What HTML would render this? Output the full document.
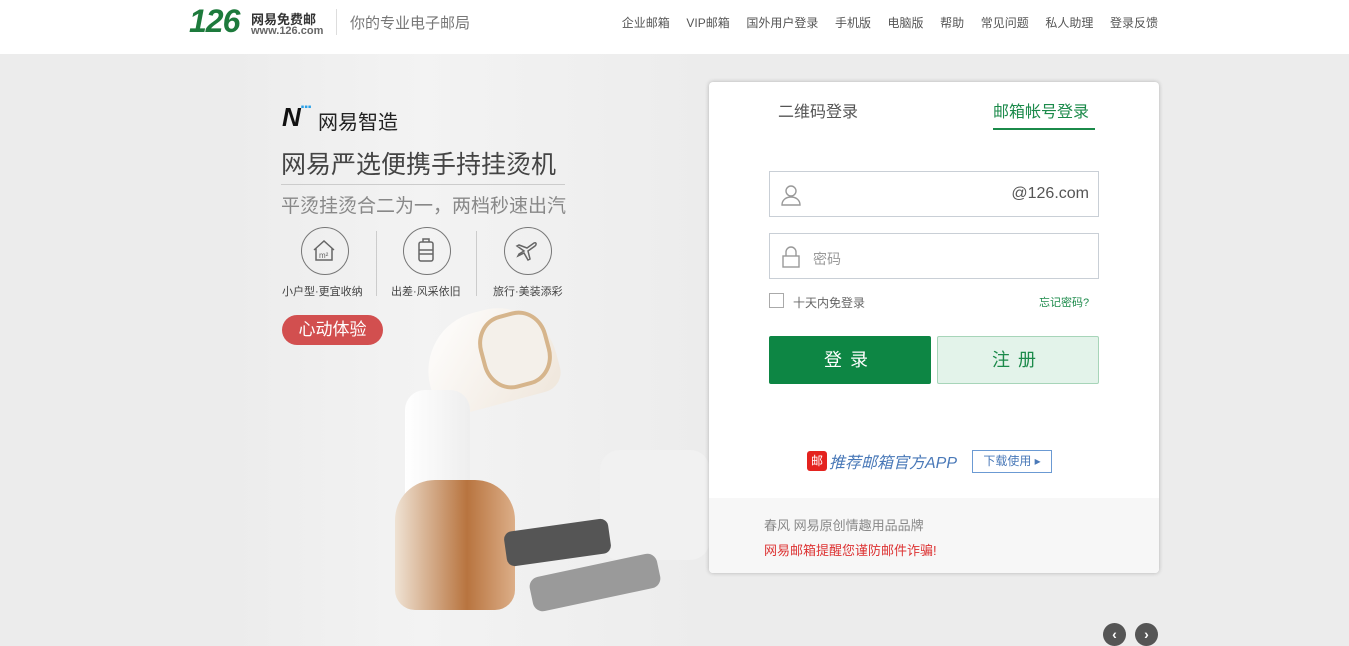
<!DOCTYPE html>
<html><head><meta charset="utf-8"><style>
*{margin:0;padding:0;box-sizing:border-box}
body{width:1349px;height:646px;overflow:hidden;font-family:"Liberation Sans","Noto Sans CJK SC",sans-serif;background:#ececec;position:relative}
.hd{position:absolute;left:0;top:0;width:1349px;height:54px;background:#fff}
.abs{position:absolute}
.nav a{color:#555;font-size:12px;margin-left:16.6px;text-decoration:none}
.box{position:absolute;left:709px;top:82px;width:450px;height:491px;background:#fff;border-radius:4px;box-shadow:0 0 4px rgba(0,0,0,.25);overflow:hidden}
.inp{position:absolute;left:60px;width:330px;height:46px;border:1px solid #c9cfd6}
.circ{position:absolute;width:48px;height:48px;border:1.5px solid #777;border-radius:50%}
</style></head><body>
<div class="hd">
 <div class="abs" style="left:189px;top:3px;font:italic bold 32px 'Liberation Sans',sans-serif;color:#1d7a3c;letter-spacing:-1px">126</div>
 <div class="abs" style="left:251px;top:9px;font-size:13px;font-weight:bold;color:#333">网易免费邮</div>
 <div class="abs" style="left:251px;top:25px;font-size:11px;font-weight:bold;color:#666">www.126.com</div>
 <div class="abs" style="left:336px;top:9px;width:1px;height:26px;background:#ddd"></div>
 <div class="abs" style="left:350px;top:12px;font-size:15px;color:#777">你的专业电子邮局</div>
 <div class="abs nav" style="right:191px;top:14px"><a>企业邮箱</a><a>VIP邮箱</a><a>国外用户登录</a><a>手机版</a><a>电脑版</a><a>帮助</a><a>常见问题</a><a>私人助理</a><a>登录反馈</a></div>
</div>
<div class="abs" style="left:230px;top:54px;width:480px;height:592px;background:linear-gradient(90deg,#ececec,#f3f3f3 40%,#ececec)"></div>
<div class="abs" style="left:282px;top:102px;font:italic 900 26px 'Liberation Sans',sans-serif;color:#111">N<span style="color:#2aa0e8;font-size:10px;vertical-align:top">▪▪▪</span></div>
<div class="abs" style="left:318px;top:106px;font-size:20px;color:#222">网易智造</div>
<div class="abs" style="left:281px;top:145px;font-size:25px;color:#444">网易严选便携手持挂烫机</div>
<div class="abs" style="left:281px;top:184px;width:284px;height:1px;background:#ccc"></div>
<div class="abs" style="left:281px;top:191px;font-size:19px;color:#888">平烫挂烫合二为一，两档秒速出汽</div>
<div class="circ" style="left:301px;top:227px"><svg width="45" height="45" viewBox="0 0 45 45" fill="none" stroke="#666" stroke-width="1.5"><path d="M12 22l10-9 10 9M14 20v12h16V20"/><text x="17" y="30" font-size="8" fill="#666" stroke="none">m²</text></svg></div>
<div class="circ" style="left:403px;top:227px"><svg width="45" height="45" viewBox="0 0 45 45" fill="none" stroke="#666" stroke-width="1.5"><rect x="15" y="14" width="14" height="19" rx="2"/><path d="M19 14v-3h6v3M15 22h14M15 26h14"/></svg></div>
<div class="circ" style="left:504px;top:227px"><svg width="45" height="45" viewBox="0 0 45 45" fill="none" stroke="#666" stroke-width="1.5"><path d="M13 28l6-3 4 7 2-1-2-8 7-5c2-2 1-4-1-3l-7 5-8-3-2 1 7 5-5 3z"/></svg></div>
<div class="abs" style="left:376px;top:231px;width:1px;height:65px;background:#ccc"></div>
<div class="abs" style="left:476px;top:231px;width:1px;height:65px;background:#ccc"></div>
<div class="abs" style="left:282px;top:283px;font-size:11px;color:#444">小户型·更宜收纳</div>
<div class="abs" style="left:391px;top:283px;font-size:11px;color:#444">出差·风采依旧</div>
<div class="abs" style="left:493px;top:283px;font-size:11px;color:#444">旅行·美装添彩</div>
<div class="abs" style="left:282px;top:315px;width:101px;height:30px;border-radius:15px;background:#d24f4f;color:#fff;font-size:17px;text-align:center;line-height:30px">心动体验</div>
<!-- product -->
<div class="abs" style="left:600px;top:450px;width:110px;height:110px;background:#f1f1f1;border-radius:20px"></div>
<div class="abs" style="left:425px;top:310px;width:130px;height:95px;border-radius:60px 60px 20px 20px;background:linear-gradient(135deg,#fff,#efe6db);transform:rotate(-15deg)"></div>
<div class="abs" style="left:480px;top:312px;width:70px;height:76px;border-radius:40%;background:#f4f0ea;border:4px solid #d6b58c;transform:rotate(-15deg)"></div>
<div class="abs" style="left:405px;top:390px;width:65px;height:220px;background:linear-gradient(90deg,#fff,#eee);border-radius:20px"></div>
<div class="abs" style="left:395px;top:480px;width:120px;height:130px;border-radius:40px 40px 20px 20px;background:linear-gradient(90deg,#efe2d3,#b8743f 60%,#dcae88)"></div>
<div class="abs" style="left:505px;top:525px;width:105px;height:35px;background:#555;border-radius:8px;transform:rotate(-8deg)"></div>
<div class="abs" style="left:530px;top:565px;width:130px;height:35px;background:#9a9a9a;border-radius:10px;transform:rotate(-12deg)"></div>
<div class="box">
 <div class="abs" style="left:69px;top:16px;font-size:16px;color:#555">二维码登录</div>
 <div class="abs" style="left:284px;top:16px;font-size:16px;color:#1b8a4a">邮箱帐号登录</div>
 <div class="abs" style="left:284px;top:46px;width:102px;height:2px;background:#1b8a4a"></div>
 <div class="inp" style="top:89px"><svg class="abs" style="left:10px;top:12px" width="22" height="22" viewBox="0 0 22 22" fill="none" stroke="#999" stroke-width="1.4"><circle cx="11" cy="7" r="5"/><path d="M2 21c0-5 4-8 9-8s9 3 9 8z"/></svg><div class="abs" style="right:9px;top:13px;font-size:16px;color:#555">@126.com</div></div>
 <div class="inp" style="top:151px"><svg class="abs" style="left:11px;top:12px" width="20" height="22" viewBox="0 0 20 22" fill="none" stroke="#999" stroke-width="1.4"><path d="M5 10V6a5 5 0 0 1 10 0v4"/><rect x="2" y="10" width="16" height="11"/></svg><div class="abs" style="left:43px;top:15px;font-size:14px;color:#999">密码</div></div>
 <div class="abs" style="left:60px;top:211px;width:15px;height:15px;border:1px solid #aaa"></div>
 <div class="abs" style="left:84px;top:212px;font-size:12px;color:#666">十天内免登录</div>
 <div class="abs" style="left:330px;top:212px;font-size:11px;color:#1b8a4a">忘记密码?</div>
 <div class="abs" style="left:60px;top:254px;width:162px;height:48px;background:#0d8644;color:#fff;font-size:18px;text-align:center;line-height:48px;letter-spacing:8px;border-radius:2px">登录</div>
 <div class="abs" style="left:228px;top:254px;width:162px;height:48px;background:#e3f3ea;border:1px solid #a7d5b9;color:#1b8a4a;font-size:18px;text-align:center;line-height:46px;letter-spacing:8px;border-radius:2px">注册</div>
 <div class="abs" style="left:98px;top:369px;width:20px;height:20px;background:#e4231f;color:#fff;font-size:12px;text-align:center;line-height:20px;border-radius:3px">邮</div>
 <div class="abs" style="left:120px;top:367px;font-size:16px;color:#4a79b8;font-style:italic">推荐邮箱官方APP</div>
 <div class="abs" style="left:263px;top:368px;width:80px;height:23px;border:1px solid #6b9ad3;color:#4a79b8;font-size:12px;text-align:center;line-height:21px">下载使用 ▸</div>
 <div class="abs" style="left:0;top:416px;width:450px;height:75px;background:#f7f7f7"></div>
 <div class="abs" style="left:55px;top:433px;font-size:13px;color:#888">春风 网易原创情趣用品品牌</div>
 <div class="abs" style="left:55px;top:458px;font-size:13px;color:#d33">网易邮箱提醒您谨防邮件诈骗!</div>
</div>
<div class="abs" style="left:1103px;top:623px;width:23px;height:23px;border-radius:50%;background:#555;color:#fff;text-align:center;line-height:22px;font-size:14px;font-weight:bold">‹</div>
<div class="abs" style="left:1135px;top:623px;width:23px;height:23px;border-radius:50%;background:#555;color:#fff;text-align:center;line-height:22px;font-size:14px;font-weight:bold">›</div>
</body></html>
